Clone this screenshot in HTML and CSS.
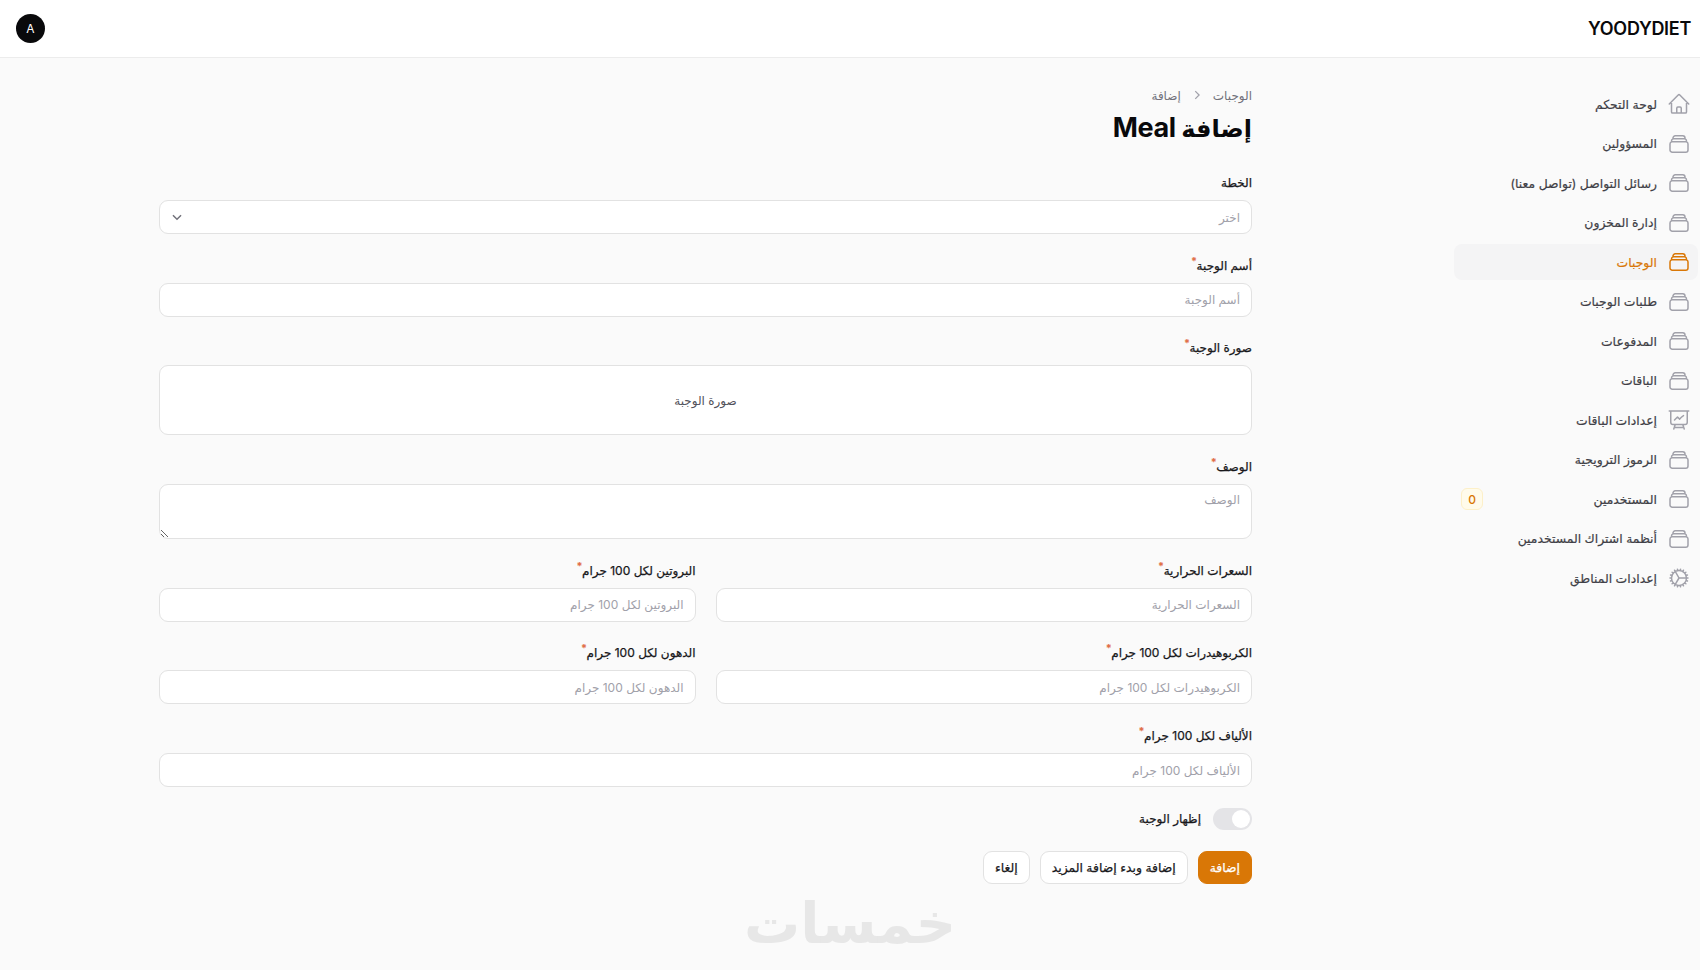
FILE: index.html
```html
<!DOCTYPE html>
<html lang="ar" dir="rtl">
<head>
    <meta charset="UTF-8">
    <title>إضافة Meal</title>
    <link rel="stylesheet" href="styles.css">
</head>
<body>
<svg class="defs" width="0" height="0">
    <symbol id="i-stack" viewBox="0 0 24 24"><path d="M6 6.878V6a2.25 2.25 0 0 1 2.25-2.25h7.5A2.25 2.25 0 0 1 18 6v.878m-12 0c.235-.083.487-.128.75-.128h10.5c.263 0 .515.045.75.128m-12 0A2.25 2.25 0 0 0 4.5 9v.878m13.5-3A2.25 2.25 0 0 1 19.5 9v.878m0 0a2.246 2.246 0 0 0-.75-.128H5.25c-.263 0-.515.045-.75.128m15 0A2.25 2.25 0 0 1 21 12v6a2.25 2.25 0 0 1-2.25 2.25H5.25A2.25 2.25 0 0 1 3 18v-6c0-.98.626-1.813 1.5-2.122"/></symbol>
    <symbol id="i-home" viewBox="0 0 24 24"><path d="m2.25 12 8.954-8.955c.44-.439 1.152-.439 1.591 0L21.75 12M4.5 9.75v10.125c0 .621.504 1.125 1.125 1.125H9.75v-4.875c0-.621.504-1.125 1.125-1.125h2.25c.621 0 1.125.504 1.125 1.125V21h4.125c.621 0 1.125-.504 1.125-1.125V9.75M8.25 21h8.25"/></symbol>
    <symbol id="i-chart" viewBox="0 0 24 24"><path d="M3.75 3v11.25A2.25 2.25 0 0 0 6 16.5h2.25M3.75 3h-1.5m1.5 0h16.5m0 0h1.5m-1.5 0v11.25A2.25 2.25 0 0 1 18 16.5h-2.25m-7.5 0h7.5m-7.5 0-1 3m8.5-3 1 3m0 0 .5 1.5m-.5-1.5h-9.5m0 0-.5 1.5m.75-9 3-3 2.148 2.148A12.061 12.061 0 0 1 16.5 7.605"/></symbol>
    <symbol id="i-cog" viewBox="0 0 24 24"><path d="M4.5 12a7.5 7.5 0 0 0 15 0m-15 0a7.5 7.5 0 1 1 15 0m-15 0H3m16.5 0H21m-1.5 0H12m-8.457 3.077 1.41-.513m14.095-5.13 1.41-.513M5.106 17.785l1.149-.964m11.49-9.642 1.149-.964M7.501 19.795l.75-1.3m7.5-12.99.75-1.3m-6.063 16.658.26-1.477m2.605-14.772.26-1.477m0 17.726-.26-1.477M10.698 4.614l-.26-1.477M16.5 19.794l-.75-1.299M7.5 4.205 12 12m6.894 5.785-1.149-.964M6.256 7.178l-1.15-.964m15.352 8.864-1.41-.513M4.954 9.435l-1.41-.514M12.002 12l-3.75 6.495"/></symbol>
</svg>

<header class="topbar">
    <div class="logo" dir="ltr">YOODYDIET</div>
    <div class="avatar">A</div>
</header>

<div class="layout">
    <aside class="sidebar">
        <a class="nav-item"><svg class="nav-icon"><use href="#i-home"/></svg><span>لوحة التحكم</span></a>
        <a class="nav-item"><svg class="nav-icon"><use href="#i-stack"/></svg><span>المسؤولين</span></a>
        <a class="nav-item"><svg class="nav-icon"><use href="#i-stack"/></svg><span>رسائل التواصل (تواصل معنا)</span></a>
        <a class="nav-item"><svg class="nav-icon"><use href="#i-stack"/></svg><span>إدارة المخزون</span></a>
        <a class="nav-item active"><svg class="nav-icon"><use href="#i-stack"/></svg><span>الوجبات</span></a>
        <a class="nav-item"><svg class="nav-icon"><use href="#i-stack"/></svg><span>طلبات الوجبات</span></a>
        <a class="nav-item"><svg class="nav-icon"><use href="#i-stack"/></svg><span>المدفوعات</span></a>
        <a class="nav-item"><svg class="nav-icon"><use href="#i-stack"/></svg><span>الباقات</span></a>
        <a class="nav-item"><svg class="nav-icon"><use href="#i-chart"/></svg><span>إعدادات الباقات</span></a>
        <a class="nav-item"><svg class="nav-icon"><use href="#i-stack"/></svg><span>الرموز الترويجية</span></a>
        <a class="nav-item"><svg class="nav-icon"><use href="#i-stack"/></svg><span>المستخدمين</span><b class="badge">0</b></a>
        <a class="nav-item"><svg class="nav-icon"><use href="#i-stack"/></svg><span>أنظمة اشتراك المستخدمين</span></a>
        <a class="nav-item"><svg class="nav-icon"><use href="#i-cog"/></svg><span>إعدادات المناطق</span></a>
    </aside>

    <main class="content">
        <nav class="crumbs">
            <span>الوجبات</span>
            <svg class="crumb-sep" viewBox="0 0 20 20"><path d="m7.5 4.5 5.5 5.5-5.5 5.5"/></svg>
            <span>إضافة</span>
        </nav>
        <h1 class="title">إضافة <span class="latin">Meal</span></h1>

        <form class="form">
            <div class="field">
                <label class="label">الخطة</label>
                <div class="control select">
                    <span class="placeholder">اختر</span>
                    <svg class="chevron" viewBox="0 0 20 20"><path d="m5.5 8 4.5 4.5L14.5 8"/></svg>
                </div>
            </div>
            <div class="field">
                <label class="label">أسم الوجبة<sup>*</sup></label>
                <input class="control" placeholder="أسم الوجبة">
            </div>
            <div class="field">
                <label class="label">صورة الوجبة<sup>*</sup></label>
                <div class="control upload">صورة الوجبة</div>
            </div>
            <div class="field">
                <label class="label">الوصف<sup>*</sup></label>
                <textarea class="control area" placeholder="الوصف"></textarea>
            </div>
            <div class="two-cols">
                <div class="field">
                    <label class="label">السعرات الحرارية<sup>*</sup></label>
                    <input class="control" placeholder="السعرات الحرارية">
                </div>
                <div class="field">
                    <label class="label">البروتين لكل 100 جرام<sup>*</sup></label>
                    <input class="control" placeholder="البروتين لكل 100 جرام">
                </div>
                <div class="field">
                    <label class="label">الكربوهيدرات لكل 100 جرام<sup>*</sup></label>
                    <input class="control" placeholder="الكربوهيدرات لكل 100 جرام">
                </div>
                <div class="field">
                    <label class="label">الدهون لكل 100 جرام<sup>*</sup></label>
                    <input class="control" placeholder="الدهون لكل 100 جرام">
                </div>
            </div>
            <div class="field">
                <label class="label">الألياف لكل 100 جرام<sup>*</sup></label>
                <input class="control" placeholder="الألياف لكل 100 جرام">
            </div>
            <div class="toggle-row">
                <span class="toggle"><i class="knob"></i></span>
                <span class="label">إظهار الوجبة</span>
            </div>
            <div class="actions">
                <button type="button" class="btn primary">إضافة</button>
                <button type="button" class="btn">إضافة وبدء إضافة المزيد</button>
                <button type="button" class="btn">إلغاء</button>
            </div>
        </form>
    </main>
</div>

<div class="watermark">خمسات</div>
</body>
</html>
```

FILE: styles.css
```css
* {
    margin: 0;
    padding: 0;
    box-sizing: border-box;
}

html, body {
    height: 100%;
    background-color: #fafafa;
    overflow: hidden;
}

body {
    position: relative;
    font-family: Inter, "Noto Sans", "DejaVu Sans", sans-serif;
    font-size: 12px;
    color: #18181b;
}

.defs {
    position: absolute;
}

.topbar {
    height: 58px;
    padding: 0 9px 0 16px;
    display: flex;
    align-items: center;
    justify-content: space-between;
    background-color: #fff;
    border-bottom: 1px solid #ececec;
}

.logo {
    font-size: 18px;
    font-weight: 600;
    letter-spacing: -0.3px;
    color: #09090b;
}

.avatar {
    width: 29px;
    height: 29px;
    border-radius: 50%;
    background-color: #09090b;
    color: #fff;
    font-size: 12px;
    font-weight: 400;
    display: flex;
    align-items: center;
    justify-content: center;
}

.layout {
    display: flex;
    align-items: flex-start;
}

/* sidebar */
.sidebar {
    width: 246px;
    flex: none;
    padding: 28px 2px 0 0;
    display: flex;
    flex-direction: column;
    gap: 3.5px;
}

.nav-item {
    height: 36px;
    padding: 0 7px;
    border-radius: 8px;
    display: flex;
    align-items: center;
    gap: 10px;
    color: #3f3f46;
    font-size: 12.4px;
    -webkit-text-stroke: 0.2px;
    white-space: nowrap;
}

.nav-icon {
    width: 24px;
    height: 24px;
    flex: none;
    fill: none;
    stroke: #a1a1aa;
    stroke-width: 1.5;
    stroke-linecap: round;
    stroke-linejoin: round;
}

.nav-item.active {
    background-color: #f4f4f5;
    color: #d97706;
}

.nav-item.active .nav-icon {
    stroke: #d97706;
}

.badge {
    margin-right: auto;
    width: 22px;
    height: 22px;
    border-radius: 6px;
    background-color: #fffbeb;
    border: 1px solid #fdf0c8;
    color: #d97706;
    font-size: 12px;
    font-weight: 500;
    -webkit-text-stroke: 0;
    display: flex;
    align-items: center;
    justify-content: center;
}

/* main */
.content {
    flex: 1;
    padding: 27px 202px 0 159px;
}

.crumbs {
    height: 20px;
    display: flex;
    align-items: center;
    gap: 9px;
    color: #71717a;
    font-size: 12px;
}

.crumb-sep {
    width: 14px;
    height: 14px;
    fill: none;
    stroke: #a1a1aa;
    stroke-width: 1.8;
}

.title {
    margin-top: 5px;
    height: 36px;
    line-height: 36px;
    font-size: 24px;
    font-weight: 700;
    color: #09090b;
}

.latin {
    font-size: 27px;
    letter-spacing: -0.4px;
}

.form {
    margin-top: 27px;
    display: flex;
    flex-direction: column;
    gap: 21.7px;
}

.field {
    display: flex;
    flex-direction: column;
    gap: 7px;
}

.two-cols {
    display: grid;
    grid-template-columns: 1fr 1fr;
    column-gap: 20px;
    row-gap: 21.7px;
}

.label {
    height: 20px;
    line-height: 20px;
    font-size: 12px;
    -webkit-text-stroke: 0.25px;
    color: #18181b;
}

.label sup {
    color: #e0663c;
    font-size: 10px;
    line-height: 0;
}

.control {
    display: block;
    width: 100%;
    height: 34px;
    padding: 0 11px;
    background-color: #fff;
    border: 1px solid #e2e2e2;
    border-radius: 9px;
    font-family: inherit;
    font-size: 12px;
    color: #18181b;
    outline: none;
}

.control::placeholder, .placeholder {
    color: #a1a1aa;
}

.select {
    display: flex;
    align-items: center;
    justify-content: space-between;
}

.chevron {
    width: 18px;
    height: 18px;
    margin-left: -3px;
    fill: none;
    stroke: #71717a;
    stroke-width: 1.6;
}

.upload {
    height: 70px;
    display: flex;
    align-items: center;
    justify-content: center;
    color: #52525b;
}

.area {
    height: 55px;
    padding-top: 7px;
    resize: vertical;
}

.toggle-row {
    margin-top: -1px;
    height: 22px;
    display: flex;
    align-items: center;
    gap: 12px;
}

.toggle {
    width: 39px;
    height: 22px;
    padding: 2px;
    border-radius: 11px;
    background-color: #e4e4e7;
    display: flex;
}

.knob {
    width: 18px;
    height: 18px;
    border-radius: 50%;
    background-color: #fff;
}

.actions {
    margin-top: -1px;
    display: flex;
    gap: 10px;
}

.btn {
    height: 33px;
    padding: 0 11px;
    background-color: #fff;
    border: 1px solid #e2e2e2;
    border-radius: 9px;
    font-family: inherit;
    font-size: 12.4px;
    -webkit-text-stroke: 0.25px;
    color: #18181b;
}

.btn.primary {
    background-color: #d97706;
    border-color: #d97706;
    color: #fff;
}

.watermark {
    position: absolute;
    left: 50%;
    bottom: 12px;
    transform: translateX(-50%);
    font-size: 56px;
    line-height: 70px;
    font-weight: 700;
    color: #e7e7e7;
}
```
